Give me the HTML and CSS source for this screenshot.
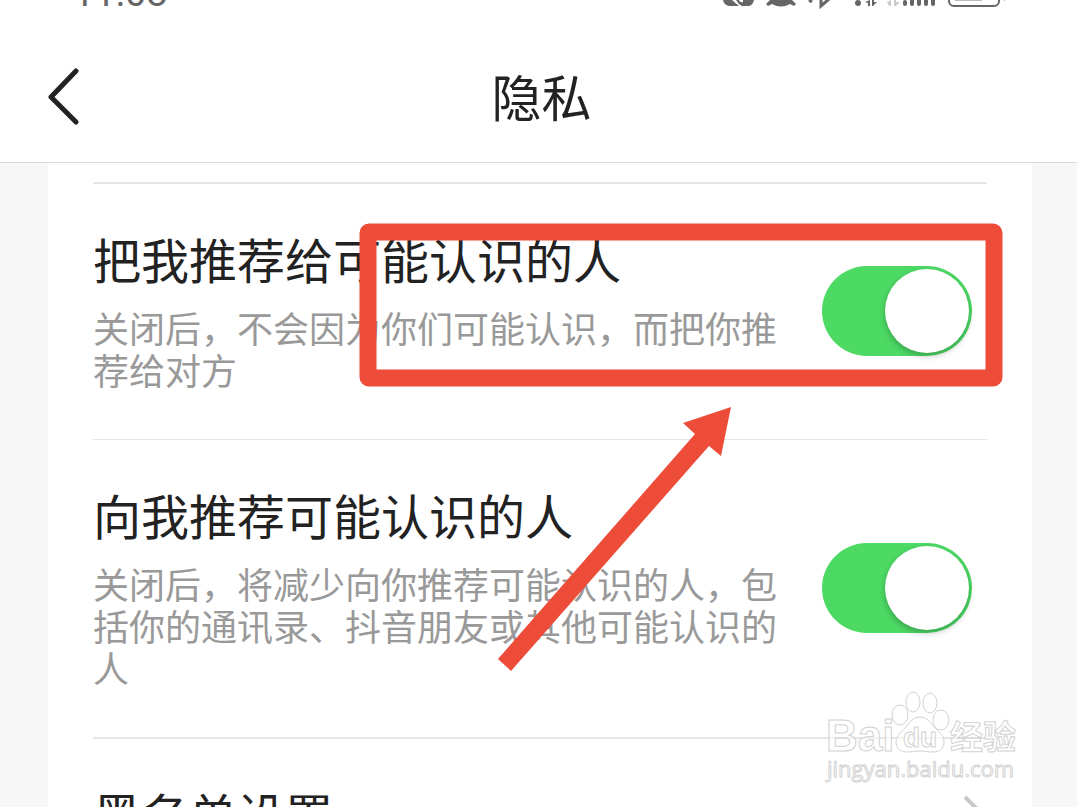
FILE: index.html
```html
<!DOCTYPE html>
<html lang="zh-CN">
<head>
<meta charset="utf-8">
<meta name="viewport" content="width=device-width, initial-scale=1">
<title>隐私</title>
<link rel="stylesheet" href="styles.css">
</head>
<body>
<div class="screen">
  <div class="status">
    <span class="status-time">11:08</span>
    <svg class="status-icons" width="286" height="10" viewBox="720 0 286 10" aria-hidden="true">
      <g fill="#666">
        <path d="M723 0h9l7 6h-10q-5-1-6-6zM736 0h3q1 3 4 2v-2h11q-1 5-5 6h-7q-4-2-6-6z"/>
        <path d="M770 0h22l4 4-2 2-4-2q-9 5-18 0l-4 2-2-2z"/>
        <circle cx="858" cy="3" r="3"/>
        <path d="M865 2l5-2v6h-2V3zM872 0h2v2h3l-4 4h-1z"/>
        <rect x="903" y="0" width="4" height="6" rx="2"/>
        <rect x="910" y="-4" width="4" height="10" rx="2"/>
        <rect x="917" y="-4" width="4" height="10" rx="2"/>
        <rect x="924" y="-4" width="4" height="10" rx="2"/>
        <rect x="931" y="-4" width="4" height="10" rx="2"/>
      </g>
      <path d="M809 0l3 2M821 -2v8l8-7" fill="none" stroke="#666" stroke-width="3"/>
      <path d="M887 2l4-2v6h-2zM894 0h2v2h4l-4 4h-2z" fill="#ccc"/>
      <rect x="949" y="-15" width="50" height="21" rx="5" fill="none" stroke="#666" stroke-width="2"/>
      <path d="M955 0h27v1h-27z" fill="#bbb"/>
      <path d="M1004 0h1v1h-1z" fill="#aaa"/>
    </svg>
  </div>
  <header class="bar">
    <button class="back" type="button" aria-label="返回">
      <svg width="32" height="58" viewBox="0 0 32 58" aria-hidden="true"><path d="M28 4L3 30L28 55" fill="none" stroke="#222" stroke-width="5" stroke-linecap="round" stroke-linejoin="round"/></svg>
    </button>
    <h1 class="bar-title">隐私</h1>
  </header>
  <main class="card">
    <section class="item item-thick">
      <div class="item-text">
        <label class="item-title" for="recommend-me">把我推荐给可能认识的人</label>
        <p class="item-desc" id="recommend-me-desc">关闭后，不会因为你们可能认识，而把你推荐给对方</p>
      </div>
      <input class="switch" type="checkbox" role="switch" id="recommend-me" aria-describedby="recommend-me-desc" checked>
    </section>
    <section class="item">
      <div class="item-text">
        <label class="item-title" for="recommend-others">向我推荐可能认识的人</label>
        <p class="item-desc" id="recommend-others-desc">关闭后，将减少向你推荐可能认识的人，包括你的通讯录、抖音朋友或其他可能认识的人</p>
      </div>
      <input class="switch" type="checkbox" role="switch" id="recommend-others" aria-describedby="recommend-others-desc" checked>
    </section>
    <a class="item item-thick item-link" href="#blocklist">
      <span class="item-title">黑名单设置</span>
      <svg width="20" height="36" viewBox="0 0 20 36" aria-hidden="true"><path d="M2 2L17 17L2 32" fill="none" stroke="#c8c8c8" stroke-width="4"/></svg>
    </a>
  </main>

  <svg class="overlay" width="1077" height="807" viewBox="0 0 1077 807" aria-hidden="true">
    <g class="mark">
      <text class="mark-latin" x="826" y="751" font-size="44">Bai</text>
      <ellipse cx="900" cy="715" rx="8" ry="10"/>
      <ellipse cx="913" cy="702" rx="7" ry="10"/>
      <ellipse cx="930" cy="703" rx="7" ry="10"/>
      <ellipse cx="941" cy="720" rx="8" ry="10"/>
      <path d="M920 717C927 717 930 722 934 727C939 732 944 735 944 742C944 749 939 752 933 752C928 752 925 751 920 751C914 751 911 752 907 752C900 752 896 748 896 742C896 735 902 732 906 727C910 722 913 717 920 717Z"/>
      <text class="mark-latin" x="903" y="747" font-size="28">du</text>
      <text class="mark-han" x="950" y="749" font-size="33">经验</text>
      <text class="mark-url" x="827" y="777" font-size="22">jingyan.baidu.com</text>
    </g>
    <rect x="368" y="232" width="626" height="146" rx="1" fill="none" stroke="#ed4d38" stroke-width="17" stroke-linejoin="round"/>
    <path d="M731 407L683 423L695 434L498 659L511 671L709 446L721 456Z" fill="#ed4d38"/>
  </svg>
</div>
</body>
</html>
```
FILE: styles.css
```css
* {
  box-sizing: border-box;
}

body {
  margin: 0;
  background: #f7f7f7;
  color: #222;
  font-family: "Noto Sans CJK SC", sans-serif;
}

.screen {
  position: relative;
  display: flex;
  flex-direction: column;
  height: 100vh;
  overflow: hidden;
}

.status {
  display: flex;
  flex: none;
  align-items: flex-end;
  justify-content: space-between;
  height: 10px;
  padding: 0 71px 0 73px;
  overflow: hidden;
  background: #fff;
}

.status-time {
  color: #666;
  font-family: Roboto, sans-serif;
  font-size: 38px;
  font-weight: 400;
  line-height: 34px;
}

.status-icons {
  display: block;
}

.bar {
  display: grid;
  flex: none;
  grid-template-columns: 80px 1fr 80px;
  align-items: center;
  height: 153px;
  padding: 0 42px 0 48px;
  border-bottom: 1px solid #d8d8d8;
  background: #fff;
}

.back {
  display: flex;
  padding: 0;
  margin-top: 20px;
  border: 0;
  background: none;
}

.bar-title {
  margin: 18px 0 0;
  font-size: 50px;
  font-weight: 400;
  line-height: 60px;
  text-align: center;
}

.card {
  flex: 1 0 auto;
  margin: 0 45px 0 48px;
  padding: 19px 45px 0;
  background: #fff;
}

.item {
  display: flex;
  align-items: center;
  gap: 44px;
  padding: 48px 15px 49px 0;
  border-top: 1px solid #e6e6e6;
}

.item-thick {
  border-top-width: 2px;
}

.item-text {
  flex: 1;
}

.item-title {
  display: block;
  color: #222;
  font-size: 48px;
  line-height: 52px;
}

.item-desc {
  margin: 22px 0 0;
  color: #999;
  font-size: 36px;
  line-height: 42px;
}

.item-link {
  justify-content: space-between;
  padding-right: 4px;
  text-decoration: none;
}

.switch {
  flex: none;
  display: flex;
  align-items: center;
  width: 150px;
  height: 90px;
  margin: 0;
  padding: 3px;
  border-radius: 45px;
  background: #4cd964;
  appearance: none;
}

.switch::before {
  width: 84px;
  height: 84px;
  margin-left: auto;
  border-radius: 50%;
  background: #fff;
  box-shadow: 0 3px 6px rgba(0, 0, 0, 0.25);
  content: "";
}

.switch:not(:checked) {
  background: #e5e5e5;
}

.switch:not(:checked)::before {
  margin-left: 0;
}

.overlay {
  position: absolute;
  top: 0;
  left: 0;
  pointer-events: none;
}

.mark {
  fill: rgba(255, 255, 255, 0.6);
  stroke: #d2d2d2;
  stroke-width: 1px;
}

.mark-latin {
  font-family: "Liberation Sans", sans-serif;
  font-weight: 700;
}

.mark-han {
  font-family: "Noto Sans CJK SC", sans-serif;
  font-weight: 700;
}

.mark-url {
  font-family: "Open Sans", sans-serif;
  font-weight: 500;
}
```
